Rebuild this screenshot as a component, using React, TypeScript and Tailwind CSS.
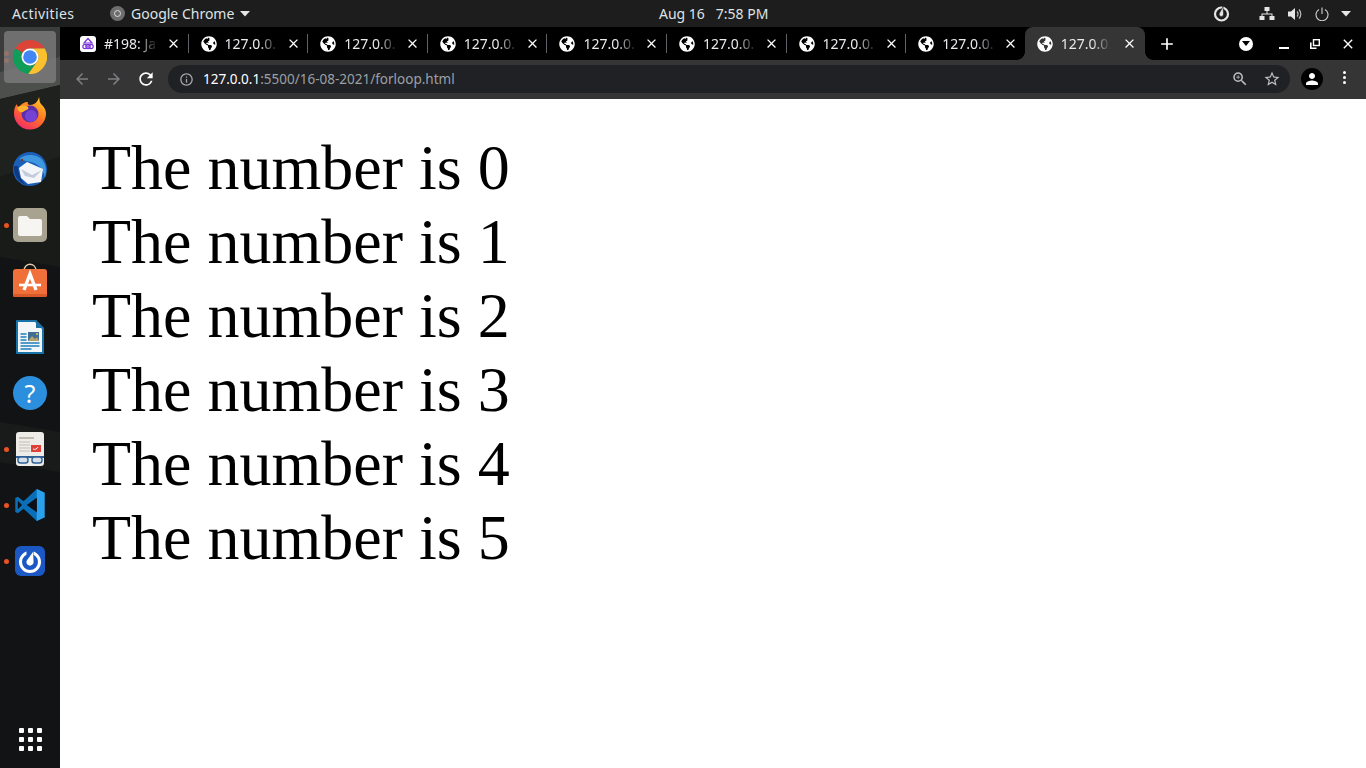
import React from "react";
import { FaGlobeAmericas } from "react-icons/fa";
import { MdArrowBack, MdArrowForward, MdRefresh, MdInfoOutline, MdZoomIn, MdStarBorder, MdPerson, MdClose, MdAdd } from "react-icons/md";

const ui = { fontFamily: '"Noto Sans", "Open Sans", sans-serif' };

function Chrome() {
  return (
    <svg width="34" height="34" viewBox="4 4 40 40">
      <path fill="#db4437" d="M24 4A20 20 0 0 1 41.32 14H24a10 10 0 0 0-8.66 5L6.68 14A20 20 0 0 1 24 4Z" />
      <path fill="#0f9d58" d="M6.68 14A20 20 0 0 0 22 43.9L32.66 29A10 10 0 0 1 15.34 19Z" />
      <path fill="#fbc02d" d="M41.32 14A20 20 0 0 1 22 43.9L32.66 29A10 10 0 0 0 24 14Z" />
      <circle cx="24" cy="24" r="10" fill="#fff" />
      <circle cx="24" cy="24" r="8" fill="#4285f4" />
    </svg>
  );
}
function Firefox() {
  return (
    <svg width="36" height="36" viewBox="0 0 36 36">
      <defs>
        <linearGradient id="ff" x1="0.8" y1="0" x2="0.2" y2="1">
          <stop offset="0" stopColor="#ffcb2d" />
          <stop offset="0.45" stopColor="#ff7a1f" />
          <stop offset="1" stopColor="#f5266e" />
        </linearGradient>
      </defs>
      <path fill="url(#ff)" d="M27 2c1 4 0 5 3 8 3 3 4 6 4 9a16 16 0 1 1-32-1c0-4 1-7 3-9 0 2 1 3 2 3 2-3 5-5 9-5-1 2 0 3 2 3 4 0 8-3 9-8Z" />
      <circle cx="18" cy="19" r="8.5" fill="#5b2fa8" />
      <circle cx="19" cy="21" r="6" fill="#7542d6" />
      <path fill="#ffb02e" d="M5 13c3-3 8-3 11-1 1 1 0 3-2 3l-3 2c-3 1-5-1-6-4Z" />
    </svg>
  );
}
function Thunderbird() {
  return (
    <svg width="36" height="36" viewBox="0 0 36 36">
      <path fill="#1c5fb8" d="M18 1c9 0 17 7 17 17s-8 17-17 17c-4 0-8-1-11-4C3 28 1 23 1 18 1 8 9 1 18 1Z" />
      <path fill="#3f97e0" d="M7 8c7-6 19-5 24 2 4 6 3 12 2 17-1-6-4-11-9-14-5-3-12-3-17-5Z" />
      <path fill="#0d3a80" d="M2 15c-1 8 4 16 12 19-5-5-8-11-8-19Z" />
      <path fill="#f4f5f8" d="M7 17l8-6 16 7-2 13-13 2-7-6Z" />
      <path fill="#c4cbdc" d="M9 18l11 6 10-5-8 8-9-2Z" />
      <circle cx="10" cy="9" r="1.2" fill="#7a3d20" />
    </svg>
  );
}
function Files() {
  return (
    <svg width="34" height="34" viewBox="0 0 34 34">
      <rect width="34" height="34" rx="5" fill="#a8a291" />
      <path fill="#f6f5f2" d="M5 10a2 2 0 0 1 2-2h7l3 3h10a2 2 0 0 1 2 2v13a2 2 0 0 1-2 2H7a2 2 0 0 1-2-2Z" />
    </svg>
  );
}
function Software() {
  return (
    <svg width="34" height="36" viewBox="0 0 34 36">
      <path d="M11 8c0-9 12-9 12 0" fill="none" stroke="#e2c9a8" strokeWidth="1.4" />
      <rect y="6" width="34" height="28" rx="3" fill="#f0703a" />
      <rect y="31" width="34" height="3" rx="1.5" fill="#d95a28" />
      <path d="M11 27 17 11 23 27" fill="none" stroke="#fff" strokeWidth="3.4" />
      <path d="M6 22H28" stroke="#fff" strokeWidth="2.6" />
    </svg>
  );
}
function Writer() {
  return (
    <svg width="28" height="34" viewBox="0 0 28 34">
      <path fill="#1873a8" d="M1 0h19l8 8v25a1 1 0 0 1-1 1H1a1 1 0 0 1-1-1V1a1 1 0 0 1 1-1Z" />
      <path fill="#f2f6f9" d="M2 2h17l7 7v23H2Z" />
      <path fill="#1b6fa5" d="M20 0l8 8h-8Z" />
      <path stroke="#1f7db8" strokeWidth="1.6" d="M4.500 14h6M4.500 17h6M4.500 20h6M4.500 23h19M4.500 26h19M4.500 29h11" />
      <rect x="12" y="12" width="11" height="9" fill="#3f6f96" />
      <path fill="#b7a26a" d="M12 21l4-5 3 3 2-2 2 4Z" />
      <circle cx="21" cy="14" r="1" fill="#f6c945" />
    </svg>
  );
}
function Help() {
  return (
    <div className="w-[34px] h-[34px] rounded-full bg-[#2c8fdd] flex items-center justify-center text-white text-[25px] leading-none" style={ui}>
      ?
    </div>
  );
}
function Reader() {
  return (
    <svg width="28" height="34" viewBox="0 0 28 34">
      <rect width="28" height="34" rx="3" fill="#eeece8" />
      <path stroke="#a39c8e" strokeWidth="1.2" d="M3 6h15" />
      <path stroke="#c4beb4" strokeWidth="1.2" d="M3 10h11M3 13h11M3 16h11M3 19h11" />
      <rect x="15" y="13" width="10" height="7" fill="#e0403a" />
      <path stroke="#fff" strokeWidth="1" d="M17 17c2 1 4 0 5-2" fill="none" />
      <rect y="24" width="28" height="2" fill="#2f5f94" />
      <rect x="2" y="25" width="10" height="6" rx="2.500" fill="#d5e0e8" stroke="#2f5f94" strokeWidth="1.400" />
      <rect x="16" y="25" width="10" height="6" rx="2.500" fill="#d5e0e8" stroke="#2f5f94" strokeWidth="1.400" />
    </svg>
  );
}
function VSCode() {
  return (
    <svg width="32" height="32" viewBox="0 0 100 100">
      <path fill="#0a6fb8" d="M96 12 71 0 30 38 12 24 4 28v44l8 4 18-14 41 38 25-12-1-2-53-36 53-38Z" />
      <path fill="#2ba0ec" d="M71 0l25 12v76l-25 12Z" />
      <path fill="#0c1016" d="M71 27v46L40 50Z" />
      <path fill="#0c1016" d="M12 37v26l13-13Z" />
    </svg>
  );
}
function Mattermost() {
  return (
    <svg width="30" height="30" viewBox="0 0 30 30">
      <rect width="30" height="30" rx="6" fill="#1c58c4" />
      <circle cx="15" cy="16" r="9.500" fill="none" stroke="#fff" strokeWidth="3" />
      <rect x="11.500" y="3" width="7" height="9" fill="#1c58c4" />
      <path fill="#fff" d="M18 6l.6 10a3.600 3.600 0 1 1-6.800-1.600Z" />
    </svg>
  );
}

function Dot({ y }: { y: number }) {
  return <span className="absolute left-[4px] w-[5px] h-[5px] rounded-full bg-[#e95420]" style={{ top: y }} />;
}

function Dock() {
  const items = [<Firefox />, <Thunderbird />, <Files />, <Software />, <Writer />, <Help />, <Reader />, <VSCode />, <Mattermost />];
  return (
    <aside className="relative w-[60px] shrink-0 bg-[#101213] overflow-hidden flex flex-col items-center">
      <svg className="absolute inset-0" width="60" height="741" viewBox="0 0 60 741">
        <rect width="60" height="741" fill="#111314" />
        <path fill="#3a3d3b" d="M0 0H60V58L0 72Z" />
        <path fill="#4c4f4b" d="M0 45 60 30V58L0 72Z" />
        <path fill="#1e211e" d="M0 72 60 58V130L0 150Z" />
        <path fill="#191b18" d="M0 150 60 130V240L0 230Z" />
        <path fill="#191b1a" d="M0 395 60 405V445L0 435Z" />
      </svg>
      <div className="relative z-10 mt-[4px] mb-[2px] w-[52px] h-[52px] rounded-[4px] bg-[#7c7c7c]/80 flex items-center justify-center">
        <Chrome />
      </div>
      {items.map((icon, i) => (
        <div key={i} className="relative z-10 w-[52px] h-[56px] flex items-center justify-center shrink-0">
          {icon}
        </div>
      ))}
      <div className="relative z-10 mt-auto mb-[17px] grid grid-cols-3 gap-x-[4px] gap-y-[4px]">
        {Array.from({ length: 9 }).map((_, i) => (
          <span key={i} className="w-[5px] h-[5px] rounded-[1px] bg-white" />
        ))}
      </div>
      <Dot y={24} />
      <Dot y={31} />
      <Dot y={196} />
      <Dot y={420} />
      <Dot y={476} />
      <Dot y={532} />
    </aside>
  );
}

function Favicon() {
  return (
    <svg width="16" height="16" viewBox="0 0 16 16" className="shrink-0">
      <rect width="16" height="16" rx="3" fill="#fff" />
      <g fill="none" stroke="#7b35d8" strokeWidth="1.2">
        <path d="M8 2.500 12 7H4Z" />
        <circle cx="5" cy="10.500" r="2.200" />
        <circle cx="8" cy="10.500" r="2.200" />
        <circle cx="11" cy="10.500" r="2.200" />
      </g>
    </svg>
  );
}

function Tab({ title, first, sep = true }: { title: string; first?: boolean; sep?: boolean }) {
  return (
    <div className={`relative w-[119.6px] h-[33px] shrink-0 flex items-center text-[#e8eaed] ${first ? "pl-[11px]" : "pl-[12px]"}`}>
      {first ? <Favicon /> : <FaGlobeAmericas size={16} color="#fff" className="shrink-0" />}
      <span className="ml-[8px] w-[56px] overflow-hidden whitespace-nowrap text-[14px] [mask-image:linear-gradient(to_right,black_60%,transparent_96%)]">
        {title}
      </span>
      <MdClose size={15} color="#fff" className="absolute left-[97px]" />
      {sep && <span className="absolute right-0 top-[7px] w-px h-[19px] bg-[#5f6368]" />}
    </div>
  );
}

function ActiveTab() {
  return (
    <div className="relative w-[120px] h-[33px] shrink-0 -ml-px rounded-t-[8px] bg-[#353535] flex items-center pl-[12px] text-[#e8eaed]">
      <span className="absolute -left-[8px] bottom-0 w-[8px] h-[8px] bg-[radial-gradient(circle_at_0_0,#000_7.5px,#353535_8px)]" />
      <span className="absolute -right-[8px] bottom-0 w-[8px] h-[8px] bg-[radial-gradient(circle_at_100%_0,#000_7.5px,#353535_8px)]" />
      <FaGlobeAmericas size={16} color="#fff" className="shrink-0" />
      <span className="ml-[8px] w-[52px] overflow-hidden whitespace-nowrap text-[14px] [mask-image:linear-gradient(to_right,black_60%,transparent_96%)]">
        127.0.0.1
      </span>
      <MdClose size={15} color="#fff" className="absolute left-[97px]" />
    </div>
  );
}

function TopBar() {
  return (
    <header className="h-[27px] shrink-0 bg-[#1d1d1d] text-[#dfe3e6] text-[14px] flex items-center relative" style={ui}>
      <span className="ml-[12px] w-[62px] tracking-[0.4px]">Activities</span>
      <span className="ml-[36px] flex items-center gap-[6px]">
        <span className="w-[15px] h-[15px] rounded-full bg-[#6e6e6e] flex items-center justify-center">
          <span className="w-[7px] h-[7px] rounded-full border border-[#dcdcdc]" />
        </span>
        Google Chrome
        <svg width="10" height="6" viewBox="0 0 10 6"><path d="M0 0h10L5 5.500Z" fill="#e6e6e6" /></svg>
      </span>
      <span className="absolute left-[659px] whitespace-pre">Aug 16   7:58 PM</span>
      <div className="ml-auto flex items-center mr-[15px]">
        <svg width="17" height="17" viewBox="0 0 17 17" className="mr-[29px]">
          <circle cx="8.500" cy="9" r="6.500" fill="none" stroke="#e6e6e6" strokeWidth="2.200" />
          <path d="M10 1.500 10.500 9a2.200 2.200 0 1 1-4-1Z" fill="#e6e6e6" stroke="#1d1d1d" strokeWidth="0.6" />
        </svg>
        <svg width="16" height="15" viewBox="0 0 16 15" className="mr-[13px]" fill="#e6e6e6">
          <rect x="5.500" y="1" width="5" height="4" />
          <rect x="0.500" y="10" width="5" height="4" />
          <rect x="10.500" y="10" width="5" height="4" />
          <path d="M7.500 5h1v2.500h5V10h-1V8.500h-9V10h-1V7.500h5Z" />
        </svg>
        <svg width="15" height="14" viewBox="0 0 15 14" className="mr-[12px]" fill="none">
          <path d="M0 4.500h3L7 1v12L3 9.500H0Z" fill="#e6e6e6" />
          <path d="M9 4.500a3.500 3.500 0 0 1 0 5M11 2.500a6.500 6.500 0 0 1 0 9" stroke="#bdbdbd" strokeWidth="1.200" />
        </svg>
        <svg width="14" height="14" viewBox="0 0 14 14" fill="none" stroke="#d0d0d0" strokeWidth="1.100" className="mr-[12px]">
          <path d="M4 2.500a6 6 0 1 0 6 0M7 0.500V7" />
        </svg>
        <svg width="10" height="6" viewBox="0 0 10 6"><path d="M0 0h10L5 5.500Z" fill="#e6e6e6" /></svg>
      </div>
    </header>
  );
}

function TabStrip() {
  return (
    <div className="h-[33px] shrink-0 bg-black flex items-center pl-[9px] relative" style={ui}>
      <Tab title="#198: JavaScript" first />
      {Array.from({ length: 7 }).map((_, i) => (
        <Tab key={i} title="127.0.0.1" sep={i < 6} />
      ))}
      <ActiveTab />
      <MdAdd size={20} color="#fff" className="ml-[12px]" />
      <div className="ml-auto flex items-center h-full">
        <span className="w-[14px] h-[14px] rounded-full bg-white flex items-center justify-center mr-[26px]">
          <svg width="8" height="5" viewBox="0 0 8 5"><path d="M0 0h8L4 5Z" fill="#000" /></svg>
        </span>
        <span className="w-[10px] h-[2px] bg-white mt-[9px] mr-[21px]" />
        <svg width="10" height="10" viewBox="0 0 10 10" fill="none" stroke="#fff" strokeWidth="1.400" className="mr-[20px]">
          <rect x="3.500" y="0.700" width="5.800" height="5.800" />
          <path d="M0.700 3.500V9.300H6.500" strokeWidth="1.800" />
        </svg>
        <MdClose size={16} color="#fff" className="mr-[10px]" />
      </div>
    </div>
  );
}

function Toolbar() {
  return (
    <div className="h-[39px] shrink-0 bg-[#353535] flex items-start pt-[5px]" style={ui}>
      <MdArrowBack size={18} color="#7d7f82" className="ml-[13px] mt-[5px]" />
      <MdArrowForward size={18} color="#7d7f82" className="ml-[14px] mt-[5px]" />
      <MdRefresh size={20} color="#fff" className="ml-[13px] mt-[4px]" />
      <div className="ml-[12px] w-[1122px] h-[28px] rounded-full bg-[#202124] flex items-center">
        <MdInfoOutline size={15} color="#a8abae" className="ml-[11px]" />
        <span className="ml-[9px] text-[13.5px] text-[#fff]">
          127.0.0.1<span className="text-[#9aa0a6]">:5500/16-08-2021/forloop.html</span>
        </span>
        <MdZoomIn size={18} color="#bcbfc2" className="ml-auto mr-[14px]" />
        <MdStarBorder size={18} color="#bcbfc2" className="mr-[9px]" />
      </div>
      <span className="ml-[11px] mt-[3px] w-[22px] h-[22px] rounded-full bg-black flex items-center justify-center">
        <MdPerson size={18} color="#fff" />
      </span>
      <span className="ml-[20px] mt-[6px] flex flex-col gap-[2px]">
        <span className="w-[3px] h-[3px] rounded-full bg-white" />
        <span className="w-[3px] h-[3px] rounded-full bg-white" />
        <span className="w-[3px] h-[3px] rounded-full bg-white" />
      </span>
    </div>
  );
}

export default function App() {
  return (
    <div className="w-[1366px] h-[768px] overflow-hidden flex flex-col bg-white">
      <TopBar />
      <div className="flex-1 flex min-h-0">
        <Dock />
        <main className="flex-1 flex flex-col min-w-0">
          <TabStrip />
          <Toolbar />
          <div
            className="flex-1 bg-white text-black text-[64px] pl-[32px] pt-[32px]"
            style={{ fontFamily: '"Liberation Serif", serif', lineHeight: "74px" }}
          >
            {[0, 1, 2, 3, 4, 5].map((n) => (
              <div key={n}>The number is {n}</div>
            ))}
          </div>
        </main>
      </div>
    </div>
  );
}
